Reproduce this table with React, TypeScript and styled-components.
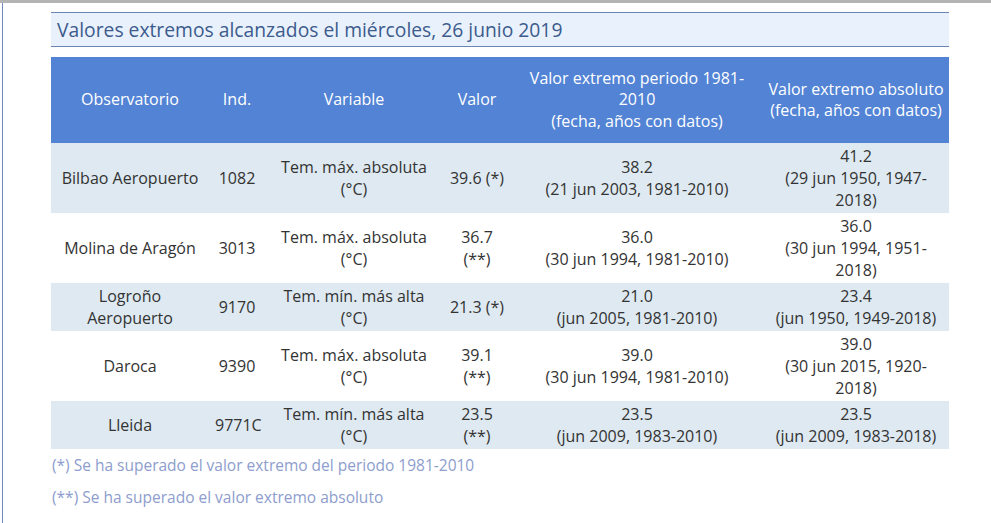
import React, { FC } from 'react';
import styled, { createGlobalStyle } from 'styled-components';

const GlobalStyle = createGlobalStyle`
  body {
    margin: 0;
    background: #ffffff;
    font-family: 'Open Sans', 'Liberation Sans', sans-serif;
  }
`;

interface Row {
  name: string;
  ind: string;
  variable: string;
  value: string;
  period: string;
  periodNote: string;
  absolute: string;
  absoluteNote: string;
}

const rows: Row[] = [
  {
    name: 'Bilbao Aeropuerto',
    ind: '1082',
    variable: 'Tem. máx. absoluta (°C)',
    value: '39.6 (*)',
    period: '38.2',
    periodNote: '(21 jun 2003, 1981-2010)',
    absolute: '41.2',
    absoluteNote: '(29 jun 1950, 1947-2018)',
  },
  {
    name: 'Molina de Aragón',
    ind: '3013',
    variable: 'Tem. máx. absoluta (°C)',
    value: '36.7 (**)',
    period: '36.0',
    periodNote: '(30 jun 1994, 1981-2010)',
    absolute: '36.0',
    absoluteNote: '(30 jun 1994, 1951-2018)',
  },
  {
    name: 'Logroño Aeropuerto',
    ind: '9170',
    variable: 'Tem. mín. más alta (°C)',
    value: '21.3 (*)',
    period: '21.0',
    periodNote: '(jun 2005, 1981-2010)',
    absolute: '23.4',
    absoluteNote: '(jun 1950, 1949-2018)',
  },
  {
    name: 'Daroca',
    ind: '9390',
    variable: 'Tem. máx. absoluta (°C)',
    value: '39.1 (**)',
    period: '39.0',
    periodNote: '(30 jun 1994, 1981-2010)',
    absolute: '39.0',
    absoluteNote: '(30 jun 2015, 1920-2018)',
  },
  {
    name: 'Lleida',
    ind: '9771C',
    variable: 'Tem. mín. más alta (°C)',
    value: '23.5 (**)',
    period: '23.5',
    periodNote: '(jun 2009, 1983-2010)',
    absolute: '23.5',
    absoluteNote: '(jun 2009, 1983-2018)',
  },
];

const columnWidths = [158, 56, 178, 68, 252, 186];

const App: FC = () => {
  return (
    <Page>
      <GlobalStyle />
      <Frame>
        <Title>Valores extremos alcanzados el miércoles, 26 junio 2019</Title>
        <Table>
          <colgroup>
            {columnWidths.map((w, i) => (
              <col key={i} style={{ width: w }} />
            ))}
          </colgroup>
          <thead>
            <tr>
              <HeadCell>Observatorio</HeadCell>
              <HeadCell>Ind.</HeadCell>
              <HeadCell>Variable</HeadCell>
              <HeadCell>Valor</HeadCell>
              <HeadCell>
                Valor extremo periodo 1981-2010
                <br />
                (fecha, años con datos)
              </HeadCell>
              <HeadCell>
                Valor extremo absoluto
                <br />
                (fecha, años con datos)
              </HeadCell>
            </tr>
          </thead>
          <tbody>
            {rows.map((r, i) => (
              <BodyRow key={r.ind} $shaded={i % 2 === 0}>
                <Cell>{r.name}</Cell>
                <Cell>{r.ind}</Cell>
                <Cell>{r.variable}</Cell>
                <Cell>{r.value}</Cell>
                <Cell>
                  {r.period}
                  <br />
                  {r.periodNote}
                </Cell>
                <Cell>
                  {r.absolute}
                  <br />
                  {r.absoluteNote}
                </Cell>
              </BodyRow>
            ))}
          </tbody>
        </Table>
        <Note>(*) Se ha superado el valor extremo del periodo 1981-2010</Note>
        <Note>(**) Se ha superado el valor extremo absoluto</Note>
      </Frame>
    </Page>
  );
};

const Page = styled.div`
  border-top: 3px solid #b4b4b4;
  min-height: 520px;
`;

const Frame = styled.div`
  margin-left: 2px;
  border-left: 1px solid #6f8ab8;
  min-height: 520px;
  padding: 9px 0 0 48px;
  box-sizing: border-box;
`;

const Title = styled.h2`
  width: 898px;
  box-sizing: border-box;
  margin: 0;
  height: 35px;
  padding: 0 0 0 6px;
  display: flex;
  align-items: center;
  background: #e9f2fc;
  border-top: 1px solid #6c86b3;
  border-bottom: 1px solid #6c86b3;
  font-weight: normal;
  font-size: 19.3px;
  color: #3d5b8c;
`;

const Table = styled.table`
  margin-top: 10px;
  width: 898px;
  table-layout: fixed;
  border-collapse: collapse;
  font-size: 16px;
  color: #333333;
`;

const HeadCell = styled.th`
  background: #5283d5;
  color: #ffffff;
  font-weight: normal;
  line-height: 21.5px;
  padding: 10px 4px;
  height: 86px;
  box-sizing: border-box;
  text-align: center;
  vertical-align: middle;
`;

const BodyRow = styled.tr<{ $shaded: boolean }>`
  background: ${(p) => (p.$shaded ? '#dee9f1' : '#ffffff')};
`;

const Cell = styled.td`
  line-height: 22px;
  padding: 2px 6px;
  text-align: center;
  vertical-align: middle;
`;

const Note = styled.p`
  margin: 3px 0 0 1px;
  font-size: 15.5px;
  line-height: 26px;
  color: #8d9dcd;
  & + & {
    margin-top: 6px;
  }
`;

export default App;
